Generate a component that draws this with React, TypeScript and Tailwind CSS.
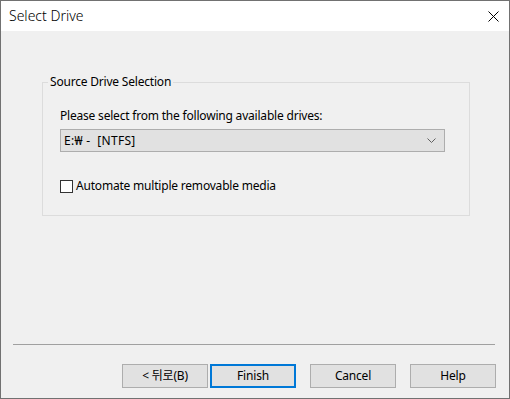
const font = "[font-family:'Segoe_UI','Noto_Sans','Noto_Sans_CJK_KR',sans-serif]"

const buttons = [
  { label: "< 뒤로(B)", primary: false },
  { label: "Finish", primary: true },
  { label: "Cancel", primary: false },
  { label: "Help", primary: false },
]

export default function App() {
  return (
    <div className={`w-[510px] h-[399px] border border-[#717171] bg-[#f0f0f0] flex flex-col text-black tracking-[-0.2px] ${font}`}>
      {/* Title bar */}
      <div className="h-[30px] bg-white flex items-center justify-between shrink-0">
        <span className="ml-[8px] text-[14px] leading-none font-light tracking-[0px]">Select Drive</span>
        <svg width="11" height="11" viewBox="0 0 11 11" className="mr-[10px] mt-[1px]">
          <path d="M0.5 0.5 L10.5 10.5 M10.5 0.5 L0.5 10.5" stroke="#000" strokeWidth="1" fill="none" />
        </svg>
      </div>

      {/* Body */}
      <div className="flex-1 flex flex-col">
        <fieldset className="mt-[42px] ml-[41px] w-[428px] h-[143px] border border-[#dcdcdc] p-0 m-0">
          <legend className="ml-[5px] px-[2px] text-[12px] leading-[18px]">Source Drive Selection</legend>
          <div className="pl-[17px] pt-[17px] flex flex-col">
            <div className="text-[12px] leading-[16px]">Please select from the following available drives:</div>
            <div className="mt-[5px] w-[385px] h-[23px] border border-[#adadad] bg-[#e1e1e1] flex items-center justify-between">
              <span className="pl-[3px] text-[12px] leading-none whitespace-pre tracking-[0.3px]">E:₩ -  [NTFS]</span>
              <svg width="9" height="5" viewBox="0 0 9 5" className="mr-[8px]">
                <path d="M0.5 0.5 L4.5 4.5 L8.5 0.5" stroke="#606060" strokeWidth="1" fill="none" />
              </svg>
            </div>
            <label className="mt-[26px] flex items-center gap-[3px] text-[12px] leading-[16px]">
              <span className="w-[13px] h-[13px] border border-[#333333] bg-white" />
              <span>Automate multiple removable media</span>
            </label>
          </div>
        </fieldset>

        <div className="flex-1" />

        <div className="ml-[12px] mr-[14px] h-px bg-[#a0a0a0]" />

        <div className="mt-[19px] mb-[10px] mr-[13px] flex justify-end gap-[14px]">
          <div className="flex gap-[2px]">
            {buttons.slice(0, 2).map((b) => (
              <div
                key={b.label}
                className={
                  b.primary
                    ? "w-[86px] h-[24px] border-2 border-[#0078d7] bg-[#e1e1e1] flex items-center justify-center text-[12px]"
                    : "w-[86px] h-[24px] border border-[#adadad] bg-[#e1e1e1] flex items-center justify-center text-[12px]"
                }
              >
                {b.label}
              </div>
            ))}
          </div>
          {buttons.slice(2).map((b) => (
            <div
              key={b.label}
              className="w-[86px] h-[24px] border border-[#adadad] bg-[#e1e1e1] flex items-center justify-center text-[12px]"
            >
              {b.label}
            </div>
          ))}
        </div>
      </div>
    </div>
  )
}
